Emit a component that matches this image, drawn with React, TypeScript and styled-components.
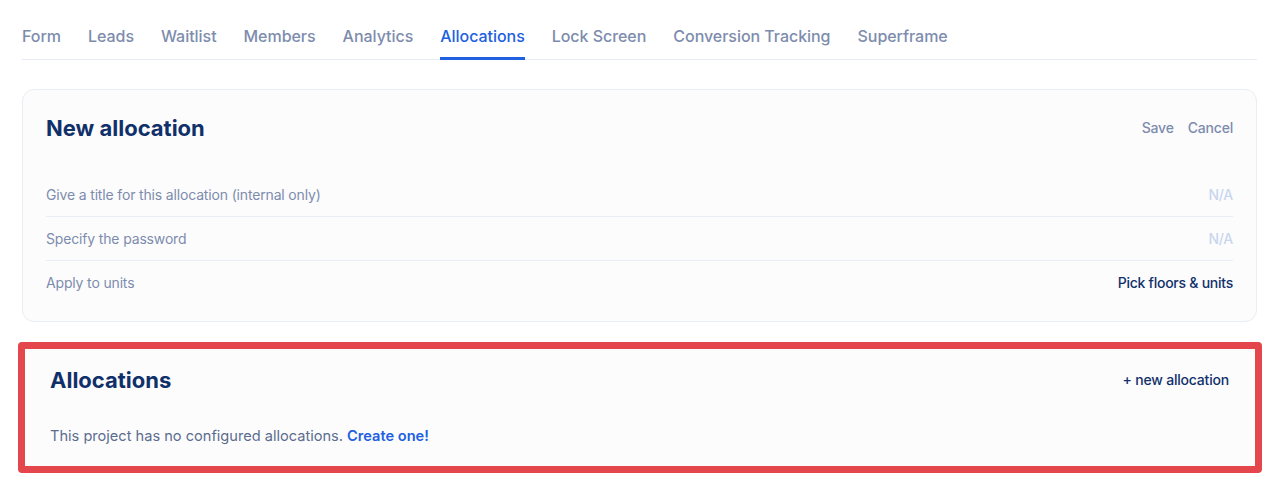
import React from 'react';
import styled, { createGlobalStyle } from 'styled-components';

const GlobalStyle = createGlobalStyle`
  body {
    margin: 0;
    background: #ffffff;
    font-family: Inter, "Noto Sans", sans-serif;
    -webkit-font-smoothing: antialiased;
  }
`;

const Page = styled.div`
  padding: 24px 23px 0 22px;
`;

const TabBar = styled.nav`
  display: flex;
  gap: 27px;
  border-bottom: 1px solid #e7ecf4;
`;

const Tab = styled.a<{ $active?: boolean }>`
  font-size: 16px;
  line-height: 24px;
  font-weight: 500;
  letter-spacing: -0.04px;
  color: ${(p) => (p.$active ? '#2160e0' : '#7d8cad')};
  padding-bottom: 9px;
  margin-bottom: -1px;
  border-bottom: 3px solid ${(p) => (p.$active ? '#2160e0' : 'transparent')};
  cursor: pointer;
`;

const Card = styled.section`
  margin-top: 29px;
  background: #fcfcfd;
  border: 1px solid #e9edf4;
  border-radius: 12px;
  padding: 23px 23px 17px 23px;
`;

const Highlight = styled.section`
  margin: 20px -5px 0 -4px;
  background: #fcfcfd;
  border: 7px solid #e4474b;
  border-radius: 4px;
  padding: 16px 26px 20px 25px;
`;

const Header = styled.div`
  display: flex;
  align-items: center;
  justify-content: space-between;
`;

const Title = styled.h2`
  margin: 0;
  font-size: 22px;
  line-height: 30px;
  font-weight: 700;
  color: #10306a;
`;

const Actions = styled.div`
  display: flex;
  gap: 14px;
`;

const Action = styled.a<{ $dark?: boolean }>`
  font-size: 14px;
  line-height: 20px;
  font-weight: 500;
  letter-spacing: -0.2px;
  color: ${(p) => (p.$dark ? '#10306a' : '#7d8cad')};
  cursor: pointer;
`;

const Rows = styled.div`
  margin-top: 29px;
`;

const Row = styled.div`
  display: flex;
  align-items: center;
  justify-content: space-between;
  height: 44px;
  & + & {
    border-top: 1px solid #e9edf5;
    height: 43px;
  }
`;

const Label = styled.span`
  font-size: 14px;
  letter-spacing: -0.16px;
  color: #7d8cad;
`;

const Value = styled.span<{ $empty?: boolean }>`
  font-size: 14px;
  font-weight: 500;
  letter-spacing: -0.25px;
  color: ${(p) => (p.$empty ? '#c9d6ee' : '#10306a')};
`;

const Empty = styled.p`
  margin: 31px 0 0;
  font-size: 14.6px;
  line-height: 20px;
  color: #5b6c8e;
`;

const Link = styled.a`
  color: #2160e0;
  font-weight: 600;
  cursor: pointer;
`;

const tabs = [
  'Form',
  'Leads',
  'Waitlist',
  'Members',
  'Analytics',
  'Allocations',
  'Lock Screen',
  'Conversion Tracking',
  'Superframe',
];

const fields = [
  { label: 'Give a title for this allocation (internal only)', value: 'N/A', empty: true },
  { label: 'Specify the password', value: 'N/A', empty: true },
  { label: 'Apply to units', value: 'Pick floors & units', empty: false },
];

const App: React.FC = () => (
  <Page>
    <GlobalStyle />
    <TabBar>
      {tabs.map((t) => (
        <Tab key={t} $active={t === 'Allocations'}>
          {t}
        </Tab>
      ))}
    </TabBar>

    <Card>
      <Header>
        <Title>New allocation</Title>
        <Actions>
          <Action>Save</Action>
          <Action>Cancel</Action>
        </Actions>
      </Header>
      <Rows>
        {fields.map((f) => (
          <Row key={f.label}>
            <Label>{f.label}</Label>
            <Value $empty={f.empty}>{f.value}</Value>
          </Row>
        ))}
      </Rows>
    </Card>

    <Highlight>
      <Header>
        <Title>Allocations</Title>
        <Action $dark>+ new allocation</Action>
      </Header>
      <Empty>
        This project has no configured allocations. <Link>Create one!</Link>
      </Empty>
    </Highlight>
  </Page>
);

export default App;
